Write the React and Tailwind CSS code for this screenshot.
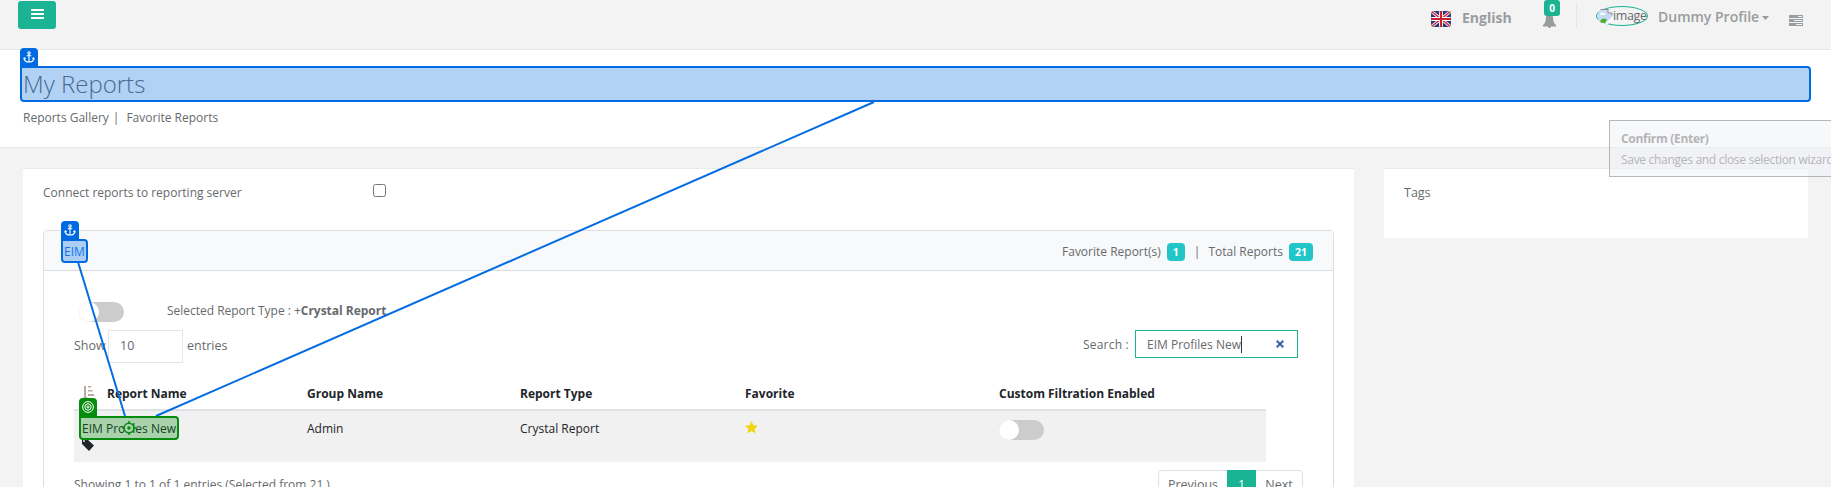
import React from "react";

const AnchorIcon = () => (
  <svg className="h-[12px] w-[12px]" viewBox="0 0 12 12" fill="none" stroke="white" strokeWidth="1.1">
    <circle cx="6" cy="1.9" r="1.2" />
    <path d="M6 3.2V11M3.7 4.7h4.6M1.2 7.6C1.5 9.8 3.3 11 6 11s4.5-1.2 4.8-3.4M.7 8.5l.6-1.6 1.4 1M11.3 8.5l-.6-1.6-1.4 1" />
  </svg>
);

const Flag = () => (
  <svg className="mt-[11px] h-4 w-5 shrink-0" viewBox="0 0 20 16">
    <defs>
      <clipPath id="flag">
        <rect width="20" height="16" rx="3" />
      </clipPath>
    </defs>
    <g clipPath="url(#flag)">
      <rect width="20" height="16" fill="#29337a" />
      <path d="M0 0L20 16M20 0L0 16" stroke="#fff" strokeWidth="3" />
      <path d="M0 0L20 16M20 0L0 16" stroke="#d0303c" strokeWidth="1.4" />
      <path d="M10 0V16M0 8H20" stroke="#fff" strokeWidth="4" />
      <path d="M10 0V16M0 8H20" stroke="#c8202f" strokeWidth="2.2" />
      <rect x=".5" y=".5" width="19" height="15" rx="2.5" fill="none" stroke="#555" strokeOpacity=".35" />
    </g>
  </svg>
);

const Toggle = () => (
  <div className="h-5 w-[45px] shrink-0 rounded-full bg-[#cccccc]">
    <div className="h-5 w-5 rounded-full bg-white" />
  </div>
);

const Header = () => (
  <header className="flex h-[50px] items-start border-b border-[#e4e6e7] text-[14px] font-semibold text-[#999c9e]">
    <button className="mt-px ml-[18px] flex h-7 w-[38px] items-start justify-center rounded-[3px] bg-[#1ab394] pt-2">
      <svg className="h-[10px] w-[13px]" viewBox="0 0 13 10" fill="white">
        <path d="M0 0h13v2H0zM0 4h13v2H0zM0 8h13v2H0z" />
      </svg>
    </button>
    <div className="grow" />
    <Flag />
    <span className="mt-[7px] ml-[11px] w-[81px] leading-[21px] font-bold">English</span>
    <div className="relative w-[33px]">
      <svg className="mt-[14px] h-[14px] w-[13px]" viewBox="0 0 13 14" fill="#999c9e">
        <path d="M4 0C3.300 1 3 2.500 2.800 5 2.600 8.500 1.600 9.800 0 11v1.500h5c0 .9.600 1.500 1.500 1.500S8 13.400 8 12.500h5V11c-1.600-1.200-2.600-2.500-2.800-6C10 2.500 9.700 1 9 0z" />
      </svg>
      <span className="absolute top-0 left-px flex h-4 w-4 items-center justify-center rounded-[3px] bg-[#1ab394] text-[10px] leading-4 font-bold text-white">0</span>
    </div>
    <div className="mt-[3px] h-[25px] w-px bg-[#e2e5e7]" />
    <div className="mt-[6px] ml-[19px] flex h-5 w-[52px] items-center rounded-[50%] border border-[#1ab394] text-[12.500px] font-normal text-[#676a6c]">
      <svg className="h-4 w-4 shrink-0" viewBox="0 0 16 16">
        <path d="M2 3l2-2h7l4 4v5l-5 5H4L1 12V6z" fill="#c7daf7" />
        <path d="M3.500 1.500H11l4 4v2" fill="none" stroke="#8c8c8c" />
        <path d="M11 1v4h4" fill="#fff" stroke="#8c8c8c" />
        <path d="M3 7c0-2 2-3 3-2 2-1 3 1 2 2z" fill="#fff" />
        <path d="M3 13.500c1-3 4-4 7-2l-2 3.500H5z" fill="#55ad33" />
        <path d="M8 16l8-8v3l-5 5z" fill="#fff" />
      </svg>
      <span className="-mt-px leading-4 tracking-[-0.35px]">image</span>
    </div>
    <span className="mt-[6px] ml-[10px] w-[103px] leading-[21px] font-semibold whitespace-nowrap">Dummy Profile</span>
    <svg className="mt-4 ml-px h-1 w-[7px]" viewBox="0 0 7 4" fill="#999c9e"><path d="M0 0h7L3.500 4z" /></svg>
    <svg className="mt-[15px] mr-7 ml-5 h-[11px] w-[14px]" viewBox="0 0 14 11">
      <path d="M0 0h14v3H0zM0 4h14v3H0zM0 8h14v3H0z" fill="#999c9e" />
      <path d="M9 1h4v1H9zM5 5h8v1H5zM7 9h6v1H7z" fill="#f3f3f4" />
    </svg>
  </header>
);

const Tab = ({ children, className }) => (
  <div className={"absolute flex h-5 w-[18px] justify-center rounded-t-[4px] pt-[3px] " + className}>{children}</div>
);

const Overlay = () => (
  <div className="pointer-events-none absolute inset-0 z-10 overflow-hidden">
    <svg className="absolute inset-0 h-[487px] w-[1831px]" fill="none" stroke="#056de2" strokeWidth="2">
      <path d="M78 262L125 416M874 102L156 416" />
    </svg>
    <Tab className="top-12 left-5 bg-[#006be0]"><AnchorIcon /></Tab>
    <div className="absolute top-[66px] left-5 h-9 w-[1791px] rounded-[4px] rounded-tl-none border-2 border-[#006be0] bg-[#006be0]/30" />
    <Tab className="top-[221px] left-[61px] bg-[#006be0]"><AnchorIcon /></Tab>
    <div className="absolute top-[239px] left-[61px] h-6 w-[27px] rounded-[4px] rounded-tl-none border-2 border-[#006be0] bg-[#006be0]/30" />
    <Tab className="top-[398px] left-[79px] bg-[#048c0c]">
      <svg className="h-3 w-3" viewBox="0 0 12 12" fill="none" stroke="white">
        <circle cx="6" cy="6" r="5.400" /><circle cx="6" cy="6" r="3.200" /><circle cx="6" cy="6" r="1.100" />
      </svg>
    </Tab>
    <div className="absolute top-[416px] left-[79px] h-6 w-[100px] rounded-[4px] rounded-tl-none border-2 border-[#048c0c] bg-[#048c0c]/30" />
    <svg className="absolute top-[421px] left-[122px] h-[14px] w-[14px]" viewBox="0 0 14 14" fill="none" stroke="#048c0c" strokeWidth="1.500">
      <circle cx="7" cy="7" r="4.800" fill="#acd4ae" />
      <circle cx="7" cy="7" r="1" fill="#048c0c" />
      <path d="M7 0v3M7 11v3M0 7h3M11 7h3" />
    </svg>
    <div className="absolute top-[120px] left-[1609px] h-[57px] w-[240px] border border-[#777]/50 bg-[#f0f1f5]/50 pt-2 pl-[11px] whitespace-nowrap text-[#b5b5b7]">
      <div className="text-[12px] leading-5 font-bold tracking-[-0.3px]">Confirm (Enter)</div>
      <div className="text-[12px] leading-[22px] tracking-[-0.3px]">Save changes and close selection wizard</div>
    </div>
  </div>
);

const Count = ({ children }) => (
  <span className="mx-[6px] flex h-[18px] items-center rounded-[4px] bg-[#23c6c8] px-[6px] text-[10.500px] font-bold text-white">{children}</span>
);

const columns = "grid grid-cols-[233px_213px_225px_254px_267px]";

const Reports = () => (
  <section className="h-[340px] w-[1331px] shrink-0 border-t border-[#e7eaec] bg-white px-5">
    <div className="flex h-[61px] items-start pt-[13px]">
      <span className="w-[330px] pt-px">Connect reports to reporting server</span>
      <span className="mt-[2px] h-[13px] w-[13px] rounded-[2.500px] border border-[#767676] bg-white" />
    </div>
    <div className="h-[300px] rounded-t-[4px] border border-[#dcdee0]">
      <div className="flex h-10 items-center justify-between rounded-t-[3px] border-b border-[#dcdee0] bg-[#f8f9fb] pr-[14px] pl-5">
        <span className="mt-[3px] text-[#1a7bf0]">EIM</span>
        <div className="mt-[3px] flex items-center">
          <span>Favorite Report(s)</span>
          <Count>1</Count>
          <span className="mr-[8px] ml-[3px]">|</span>
          <span>Total Reports</span>
          <Count>21</Count>
        </div>
      </div>
      <div className="pl-[30px]">
        <div className="flex h-[59px] pt-[31px] pl-[5px]">
          <Toggle />
          <span className="ml-[43px] leading-[17px] tracking-[-0.02px]">Selected Report Type : +<b>Crystal Report</b></span>
        </div>
        <div className="flex h-[52px] items-start">
          <span className="mt-[6px] w-[34px] text-[12.500px]">Show</span>
          <span className="h-[33px] w-[75px] border border-[#e5e6e7] pt-[5px] pl-[11px] text-[12.500px]">10</span>
          <span className="mt-[6px] ml-1 text-[12.500px]">entries</span>
          <div className="mr-[35px] ml-auto flex">
            <span className="mt-[5px] w-[52px] tracking-[0.2px]">Search :</span>
            <div className="flex h-7 w-[163px] items-start border border-[#1ab394] pt-1 pl-[11px]">
              <span>EIM Profiles New</span>
              <span className="mt-[1px] h-[17px] w-px bg-[#333]" />
              <svg className="mt-[5px] mr-[13px] ml-auto h-2 w-2" viewBox="0 0 8 8" stroke="#3c61a8" strokeWidth="2"><path d="M.7.7l6.600 6.600M7.300.7L.7 7.300" /></svg>
            </div>
          </div>
        </div>
        <div className="w-[1192px] text-[#212529]">
          <div className={columns + " h-[29px] border-b-2 border-[#dee2e6] pt-[2px] font-bold"}>
            <span className="flex">
              <svg className="mt-[2px] mr-[12px] ml-[9px] h-[13px] w-3" viewBox="0 0 12 13" fill="#b8aaa5">
                <path d="M1 0h2v11h2l-3 2-2-2h1zM5 0h3v1.500H5zM5 4h4.500v1.500H5zM5 8h6v2H5z" />
              </svg>
              Report Name
            </span>
            <span>Group Name</span><span>Report Type</span><span>Favorite</span><span>Custom Filtration Enabled</span>
          </div>
          <div className={columns + " h-[51px] bg-[#f1f1f1] pt-[8px]"}>
            <div className="pl-2">
              <div>EIM Profiles New</div>
              <svg className="h-3 w-3" viewBox="0 0 12 12"><path d="M0 0h5l7 6.500L7 12 0 5z" fill="#212529" /><circle cx="2" cy="2" r=".9" fill="#f1f1f1" /></svg>
            </div>
            <span>Admin</span><span>Crystal Report</span>
            <svg className="mt-[2px] h-[13px] w-[13px]" viewBox="0 0 13 13" fill="#f0d60c"><path d="M6.500 0l1.900 4.200 4.600.5-3.400 3.100.9 4.600-4-2.300-4 2.300.9-4.600L0 4.700l4.600-.5z" /></svg>
            <div className="pt-px"><Toggle /></div>
          </div>
        </div>
        <div className="flex h-[26px] items-start pt-2">
          <span className="mt-[5px]">Showing 1 to 1 of 1 entries (Selected from 21 )</span>
          <div className="mr-[30px] ml-auto flex h-7 w-[145px] rounded-[4px] border border-[#dddfe3] text-[12.500px] leading-[27px]">
            <span className="w-[68px] text-center">Previous</span>
            <span className="-mt-px w-[29px] bg-[#1ab394] pt-px text-center text-white">1</span>
            <span className="grow text-center">Next</span>
          </div>
        </div>
      </div>
    </div>
  </section>
);

export default function App() {
  return (
    <div className="relative h-[487px] w-[1831px] overflow-hidden bg-[#f3f3f4] font-['Open_Sans',sans-serif] text-[12px] leading-[20px] text-[#676a6c]">
      <Header />
      <div className="h-[98px] border-b border-[#e4e6e7] bg-white pt-[19px] pl-[23px]">
        <h1 className="text-[24px] leading-[29px] font-light">My Reports</h1>
        <div className="mt-[10px] flex gap-1"><span>Reports Gallery</span><span>|</span><span className="ml-[3px]">Favorite Reports</span></div>
      </div>
      <main className="flex items-start gap-[30px] pt-5 pl-[23px]">
        <Reports />
        <aside className="h-[70px] w-[424px] border-t border-[#e7eaec] bg-white pt-[14px] pl-5 text-[12.500px]">Tags</aside>
      </main>
      <Overlay />
    </div>
  );
}
